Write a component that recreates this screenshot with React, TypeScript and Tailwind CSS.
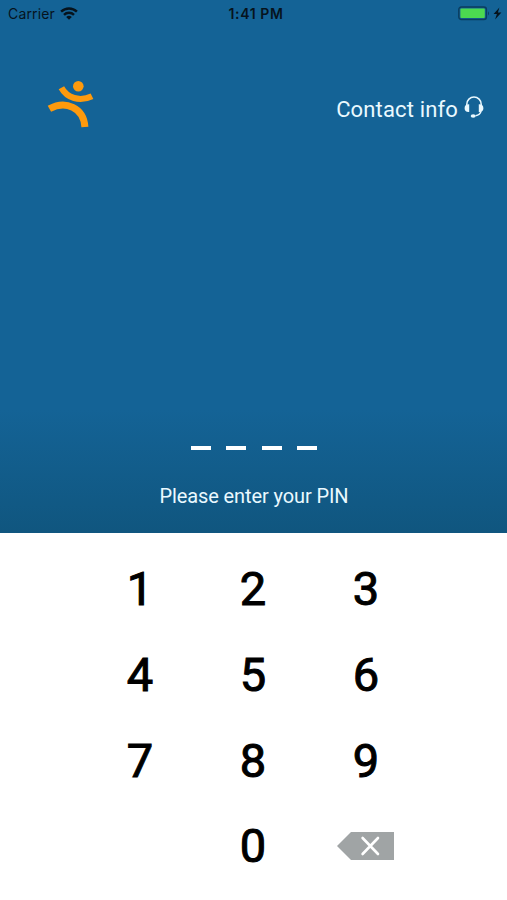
import React, { Component } from 'react';

const keys = ['1', '2', '3', '4', '5', '6', '7', '8', '9', '', '0', 'delete'];

function WifiIcon() {
  return <svg className="w-[18px] h-[13px]" viewBox="0 0 18 13" fill="none" stroke="#06131d" strokeWidth="2.4">
    <path d="M1.1 4.7a11.2 11.2 0 0 1 15.8 0" />
    <path d="M4 7.8a7.1 7.1 0 0 1 10 0" />
    <path d="M9 12.8 6.2 10a4 4 0 0 1 5.6 0z" fill="#06131d" stroke="none" />
  </svg>;
}

function BatteryIcon() {
  return <svg className="w-[46px] h-[16px]" viewBox="0 0 46 16">
    <rect x="0.8" y="1" width="27.6" height="12.5" rx="2.5" fill="none" stroke="#0b3d5f" strokeWidth="1.4" />
    <rect x="2.4" y="2.6" width="24.4" height="9.4" rx="1" fill="#4cd950" />
    <path d="M30 5.2q2 2.1 0 4.2z" fill="#0b3d5f" />
    <path d="M41.4 1.4 35.6 8h3.3l-1.8 5.6L43.4 6.4h-3.5z" fill="#06131d" />
  </svg>;
}

function Logo() {
  return <svg className="w-[48px] h-[48px]" viewBox="0 0 48 48" fill="none" stroke="#fe9a0d">
    <circle cx="31.3" cy="6.3" r="5.3" fill="#fe9a0d" stroke="none" />
    <path d="M14.4 7.8C20 18 32.5 22.2 45 16.2" strokeWidth="6.2" />
    <path d="M2.4 28.8C18.5 20 36.8 27.5 37.9 47" strokeWidth="7" />
  </svg>;
}

function HeadsetIcon() {
  return <svg className="w-[20px] h-[22px]" viewBox="0 0 20 22" fill="none" stroke="#eaf9ff" strokeWidth="1.5">
    <path d="M2.8 9V8.2a7.2 7.2 0 0 1 14.4 0V9M17 15.2c-.5 2.6-2.3 4.2-5.5 4.5" />
    <path d="M5.2 8.3v7.7C2 16.2.6 14.5.6 12.2S2 8.2 5.2 8.3zM14.8 8.3v7.7c3.2.2 4.6-1.5 4.6-3.8s-1.4-4-4.6-3.9z" fill="#eaf9ff" stroke="none" />
    <ellipse cx="9.2" cy="20" rx="2.5" ry="1.7" fill="#eaf9ff" stroke="none" />
  </svg>;
}

function DeleteIcon() {
  return <svg className="w-[57px] h-[28px]" viewBox="0 0 57 28">
    <path d="M0 14 14 0h43v28H14z" fill="#a0a4a5" />
    <path d="m25.6 6 15.4 16M41 6 25.6 22" stroke="#fff" strokeWidth="2.6" strokeLinecap="round" />
  </svg>;
}

class App extends Component<{}, { pin: string }> {
  constructor(props: {}) {
    super(props);
    this.state = {
      pin: ''
    };
  }

  handleKey = (key: string) => {
    this.setState(({ pin }) => ({
      pin: key === 'delete' ? pin.slice(0, -1) : (pin + key).slice(0, 4)
    }));
  }

  render() {
    return <div className="flex flex-col w-[507px] h-[900px] overflow-hidden bg-white font-['Roboto',sans-serif]">
      <div className="flex flex-col h-[533px] bg-[linear-gradient(to_bottom,#146396_0px,#146396_410px,#10567f_533px)] text-[#eaf9ff]">
        <div className="grid grid-cols-3 items-center h-[27px] pl-2 pr-[3px] font-['Inter',sans-serif] text-[#06131d]">
          <div className="flex items-center gap-[5px] text-[14px] leading-none tracking-[0.15px]">
            <span>Carrier</span>
            <WifiIcon />
          </div>
          <span className="text-center text-[14px] leading-none font-semibold tracking-[0.6px]">1:41 PM</span>
          <div className="flex justify-end">
            <BatteryIcon />
          </div>
        </div>
        <div className="flex items-start justify-between pt-[53px] pl-[47px] pr-[23px]">
          <Logo />
          <div className="flex items-start gap-[6px] pt-4">
            <span className="pt-px text-[22px] leading-[26px] tracking-[0.15px]">Contact info</span>
            <HeadsetIcon />
          </div>
        </div>
        <div className="flex-auto" />
        <div className="flex justify-center gap-[15.5px] pl-px">
          {[0, 1, 2, 3].map(i =>
            <span key={i} className={this.state.pin.length > i ? 'w-5 h-1 bg-[#fe9a0d]' : 'w-5 h-1 bg-white'} />
          )}
        </div>
        <p className="pt-[34px] pb-[25px] pl-px text-center text-[20px] leading-[24px] tracking-[-0.1px]">Please enter your PIN</p>
      </div>
      <div className="grid grid-cols-[repeat(3,113px)] auto-rows-[85.7px] justify-center pt-[13px] pr-px">
        {keys.map((key, i) => key === ''
          ? <span key={i} />
          : <button
            key={i}
            className={key === 'delete'
              ? 'flex items-center justify-center pr-[2px]'
              : 'flex items-center justify-center text-[47px] leading-none font-normal text-black [-webkit-text-stroke:1px_#000]'}
            type="button"
            onClick={() => this.handleKey(key)}
          >
            {key === 'delete' ? <DeleteIcon /> : key}
          </button>
        )}
      </div>
    </div>;
  }
}

export default App;
